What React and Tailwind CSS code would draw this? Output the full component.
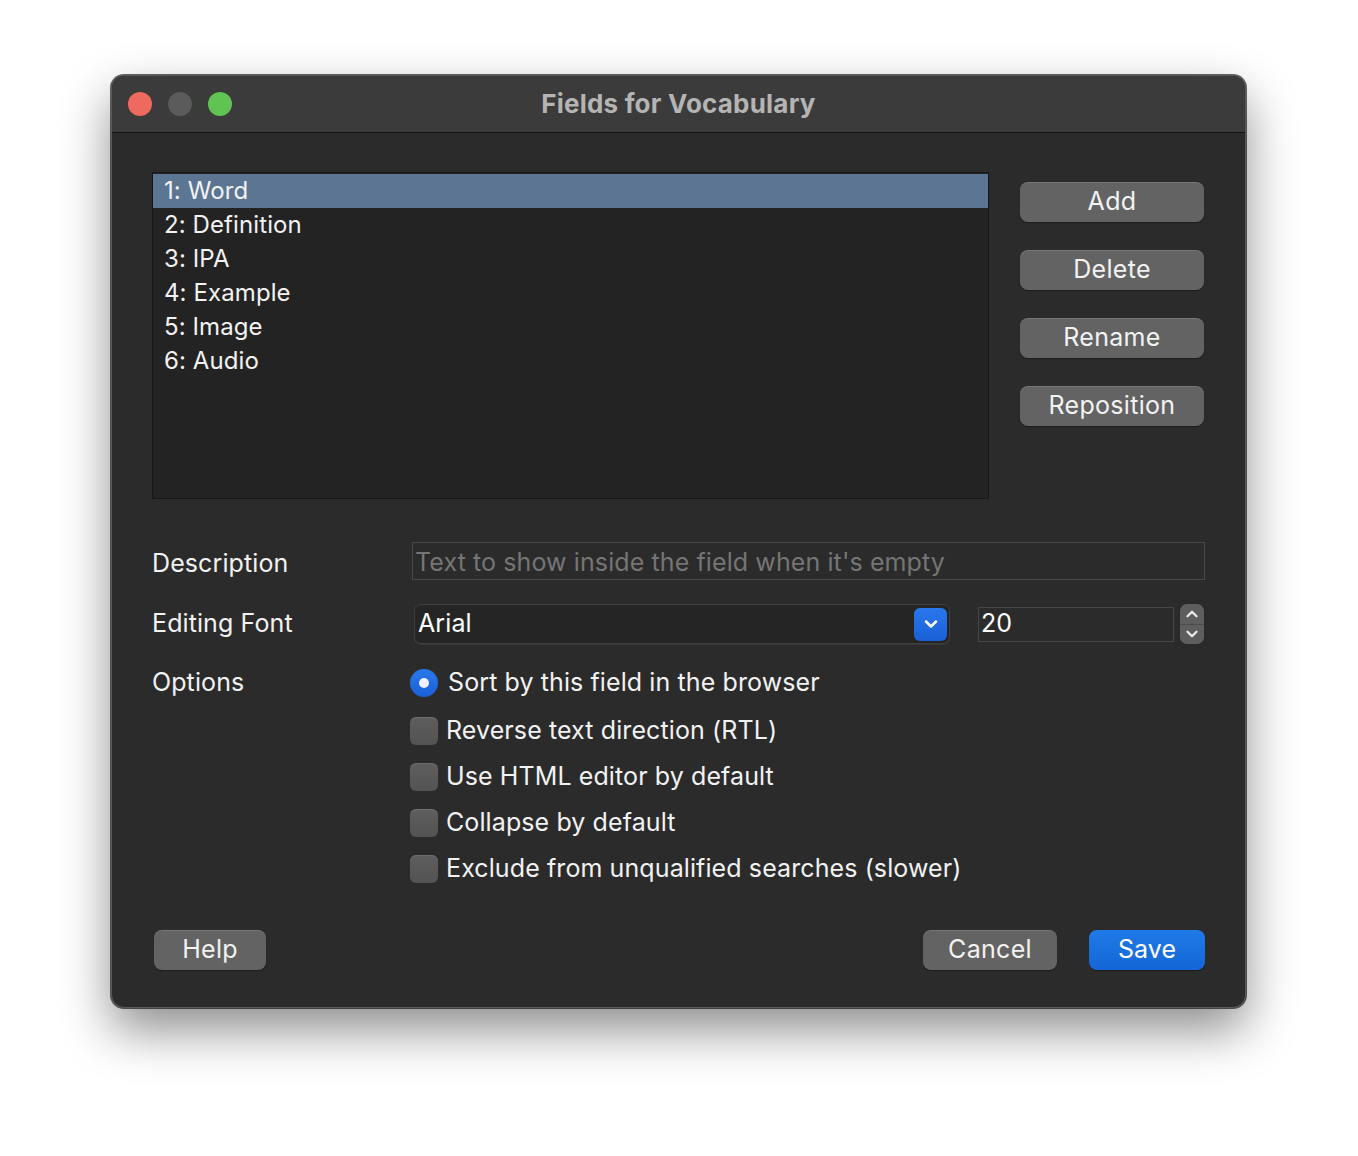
import { ChevronDown, ChevronUp } from "lucide-react";

const fields = ["1: Word", "2: Definition", "3: IPA", "4: Example", "5: Image", "6: Audio"];

const options = [
    { label: "Reverse text direction (RTL)" },
    { label: "Use HTML editor by default" },
    { label: "Collapse by default" },
    { label: "Exclude from unqualified searches (slower)" },
];

function GreyButton({ children, className = "" }) {
    return (
        <button className={`h-[40px] rounded-[8px] bg-[#636363] text-[25px] tracking-[0.3px] text-[#f2f2f2] shadow-[inset_0_1px_0_rgba(255,255,255,0.12),0_1px_1px_rgba(0,0,0,0.35)] ${className}`}>
            {children}
        </button>
    );
}

export default function App() {
    return (
        <div className="min-h-[1156px] w-[1358px] bg-white pl-[111px] pt-[75px]" style={{ fontFamily: "Inter, 'Noto Sans', sans-serif" }}>
            <div className="flex h-[933px] w-[1135px] flex-col overflow-hidden rounded-[13px] border border-[#5a5a5a] bg-[#2b2b2b] shadow-[0_22px_50px_rgba(0,0,0,0.45),0_0_0_1px_rgba(0,0,0,0.6)]">
                {/* title bar */}
                <div className="relative flex h-[57px] shrink-0 items-center border-b border-b-[#111] bg-[#3b3b3b]">
                    <div className="flex gap-[16px] pl-[16px]">
                        <span className="h-[24px] w-[24px] rounded-full bg-[#ee6a5f]" />
                        <span className="h-[24px] w-[24px] rounded-full bg-[#5b5b5b]" />
                        <span className="h-[24px] w-[24px] rounded-full bg-[#5fc454]" />
                    </div>
                    <div className="absolute inset-0 flex items-center justify-center pb-[2px] text-[26px] font-bold tracking-[0.2px] text-[#b4b4b4]">
                        Fields for Vocabulary
                    </div>
                </div>

                <div className="flex flex-1 flex-col px-[40px] pt-[39px] text-[25px] tracking-[0.1px]">
                    <div className="flex gap-[31px]">
                        <div className="h-[327px] w-[837px] border border-[#171717] bg-[#232323] pt-[1px]">
                            {fields.map((f, i) => (
                                <div
                                    key={f}
                                    className={`flex h-[34px] items-center pl-[11px] text-[24px] tracking-[0.1px] text-[#f2f2f2] ${i === 0 ? "bg-[#5b7593]" : ""}`}>
                                    {f}
                                </div>
                            ))}
                        </div>
                        <div className="flex w-[184px] flex-col gap-[28px] pt-[10px]">
                            <GreyButton>Add</GreyButton>
                            <GreyButton>Delete</GreyButton>
                            <GreyButton>Rename</GreyButton>
                            <GreyButton>Reposition</GreyButton>
                        </div>
                    </div>

                    <div className="mt-[43px] flex h-[38px] items-center">
                        <div className="w-[260px] pt-[3px] leading-[32px] text-[#f2f2f2]">Description</div>
                        <div className="flex h-[38px] flex-1 items-center border border-[#484848] bg-[#2b2b2b] pl-[2px] pt-[3px] text-[#757575]">
                            Text to show inside the field when it's empty
                        </div>
                    </div>

                    <div className="mt-[24px] flex items-center">
                        <div className="w-[260px] text-[#f2f2f2]">Editing Font</div>
                        <div className="ml-[2px] flex h-[40px] w-[536px] items-center rounded-[7px] border border-[#3e3e3e] bg-[#252525] pr-[2px] shadow-[0_1px_0_rgba(255,255,255,0.06)]">
                            <span className="flex-1 pl-[3px] text-white">Arial</span>
                            <span className="flex h-[33px] w-[33px] items-center justify-center rounded-[6px] bg-gradient-to-b from-[#2a78ec] to-[#1a5fd6]">
                                <ChevronDown size={20} strokeWidth={3} color="#fff" />
                            </span>
                        </div>
                        <div className="ml-[28px] flex h-[35px] w-[196px] items-center border border-[#474747] bg-[#2b2b2b] pl-[2px] text-white">
                            20
                        </div>
                        <div className="ml-[6px] flex h-[40px] w-[24px] flex-col overflow-hidden rounded-[7px] bg-[#5e5e5e]">
                            <span className="flex flex-1 items-center justify-center border-b border-b-[#4a4a4a]">
                                <ChevronUp size={18} strokeWidth={3} color="#ececec" />
                            </span>
                            <span className="flex flex-1 items-center justify-center">
                                <ChevronDown size={18} strokeWidth={3} color="#ececec" />
                            </span>
                        </div>
                    </div>

                    <div className="mt-[16px] flex">
                        <div className="flex h-[46px] w-[258px] items-center text-[#f2f2f2]">Options</div>
                        <div className="flex flex-col">
                            <div className="flex h-[46px] items-center gap-[10px]">
                                <span className="flex h-[28px] w-[28px] items-center justify-center rounded-full bg-gradient-to-b from-[#2a78ec] to-[#1a5fd6]">
                                    <span className="h-[10px] w-[10px] rounded-full bg-[#eef2ff]" />
                                </span>
                                <span className="text-[#f2f2f2]">Sort by this field in the browser</span>
                            </div>
                            {options.map((o, i) => (
                                <div key={o.label} className={`flex h-[46px] items-center gap-[8px] ${i === 0 ? "mt-[2px]" : ""}`}>
                                    <span className="h-[28px] w-[28px] rounded-[6px] bg-gradient-to-b from-[#5e5e5e] to-[#535353] shadow-[inset_0_1px_0_rgba(255,255,255,0.1)]" />
                                    <span className="text-[#f2f2f2]">{o.label}</span>
                                </div>
                            ))}
                        </div>
                    </div>

                    <div className="mt-auto mb-[37px] flex items-center">
                        <GreyButton className="ml-[2px] w-[112px]">Help</GreyButton>
                        <div className="flex-1" />
                        <GreyButton className="w-[134px]">Cancel</GreyButton>
                        <button className="ml-[32px] h-[40px] w-[116px] rounded-[8px] bg-gradient-to-b from-[#1f7ae8] to-[#1565d6] text-white shadow-[0_1px_1px_rgba(0,0,0,0.35)]">
                            Save
                        </button>
                    </div>
                </div>
            </div>
        </div>
    );
}
